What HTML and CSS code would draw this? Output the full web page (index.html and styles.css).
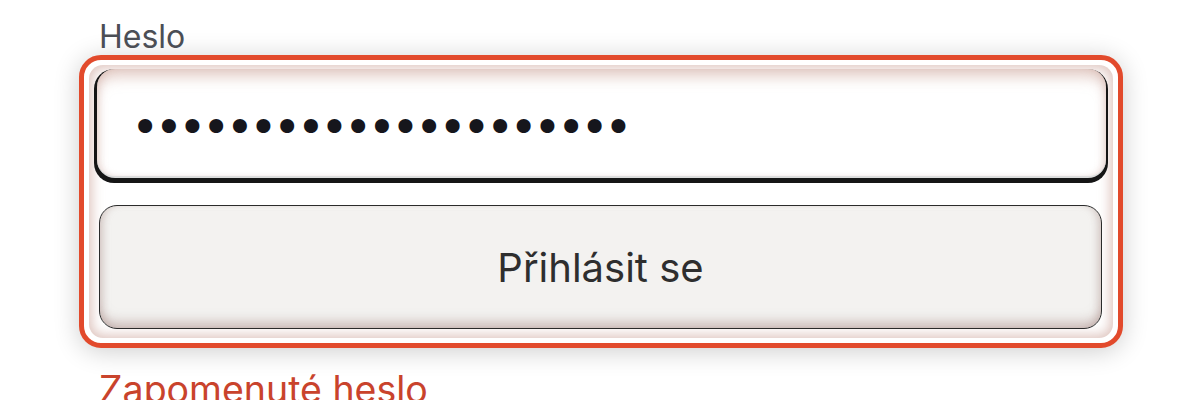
FILE: index.html
```html
<!DOCTYPE html>
<html lang="cs">
<head>
<meta charset="utf-8">
<link rel="stylesheet" href="styles.css">
</head>
<body>
<div class="form">
  <div class="label">Heslo</div>
  <div class="field-box">
    <div class="field-inner">
      <div class="input-wrap">
        <div class="input">•••••••••••••••••••••</div>
      </div>
      <div class="button">Přihlásit se</div>
    </div>
  </div>
  <div class="forgot">Zapomenuté heslo</div>
</div>
</body>
</html>
```
FILE: styles.css
```css
html, body {
  margin: 0;
  padding: 0;
  background: #ffffff;
}
body {
  width: 1200px;
  height: 400px;
  overflow: hidden;
  font-family: Inter, "Liberation Sans", sans-serif;
}
.form {
  padding: 21px 0 0 79px;
  width: 1044px;
}
.label {
  font-size: 32px;
  line-height: 31px;
  color: #4b4e55;
  padding-left: 20px;
}
.field-box {
  margin-top: 3px;
  width: 1044px;
  height: 293px;
  box-sizing: border-box;
  border: 5px solid #e24a2c;
  border-radius: 22px;
  padding: 5px;
  background: #ffffff;
  box-shadow: 0 3px 26px rgba(0, 0, 0, 0.2);
}
.field-inner {
  height: 100%;
  box-sizing: border-box;
  padding: 4px 5px 9px 5px;
  border-radius: 14px;
  background: #ffffff;
  box-shadow: inset 0 0 12px 3px rgba(205, 165, 155, 0.65);
  display: flex;
  flex-direction: column;
  gap: 22px;
}
.input-wrap {
  height: 114px;
  box-sizing: border-box;
  background: #151515;
  border-radius: 20px;
  padding: 0 2px 5px 3px;
}
.input {
  height: 100%;
  box-sizing: border-box;
  background: #ffffff;
  border-radius: 18px;
  border-bottom: 2px solid #dcdcdc;
  box-shadow: inset 0 12px 14px -4px rgba(205, 165, 155, 0.55), inset 5px 0 9px -4px rgba(205, 165, 155, 0.45), inset -5px 0 9px -4px rgba(205, 165, 155, 0.45);
  display: flex;
  align-items: center;
  padding: 8px 0 0 34px;
  font-family: "DejaVu Sans", sans-serif;
  font-size: 48px;
  color: #16161c;
  letter-spacing: -4.65px;
}
.button {
  height: 124px;
  margin: 0 6px 0 5px;
  box-sizing: border-box;
  border: 1.5px solid #2b2b2b;
  border-radius: 18px;
  background: #f3f2f0;
  box-shadow: inset 0 -10px 12px -4px rgba(170, 140, 135, 0.5), inset 7px 0 9px -5px rgba(170, 140, 135, 0.4), inset -7px 0 9px -5px rgba(170, 140, 135, 0.4);
  display: flex;
  align-items: center;
  justify-content: center;
  font-size: 40px;
  color: #2e2e2e;
}
.forgot {
  margin-top: 23px;
  padding-left: 20px;
  font-size: 37.5px;
  line-height: 37.5px;
  color: #c9432c;
}
```
